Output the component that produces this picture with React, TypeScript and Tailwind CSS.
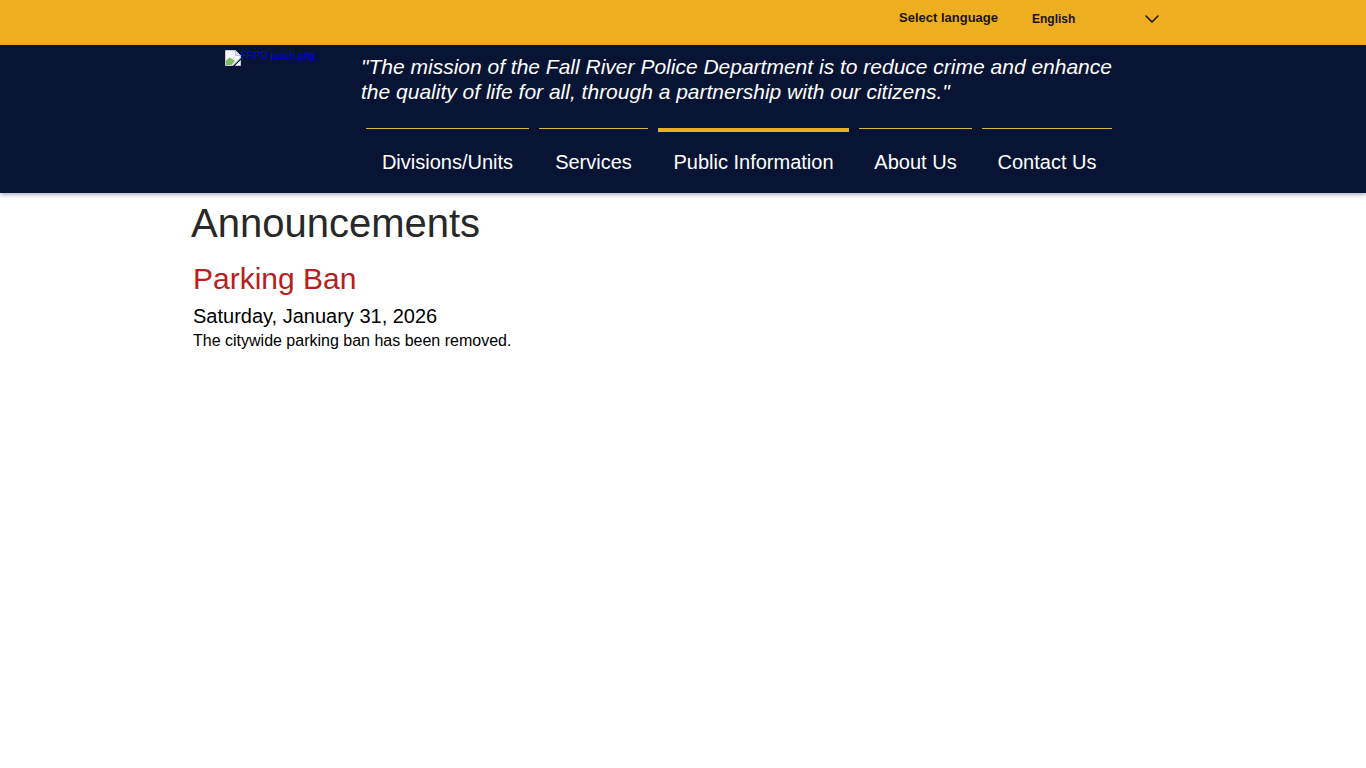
import React from 'react';
import { ChevronDown } from 'lucide-react';

const navItems = [
  { label: 'Divisions/Units', width: 'w-[163px]', active: false },
  { label: 'Services', width: 'w-[109px]', active: false },
  { label: 'Public Information', width: 'w-[191px]', active: true },
  { label: 'About Us', width: 'w-[113px]', active: false },
  { label: 'Contact Us', width: 'w-[130px]', active: false },
];

function BrokenImage() {
  return (
    <svg width="16" height="16" viewBox="0 0 16 16" className="shrink-0">
      <path d="M0.5 0.5H10.5L15.5 5.5V8L8 15.5H0.5Z" fill="#f4f6f8" stroke="#c3c9cf" />
      <path d="M10.5 0.5V5.5H15.5Z" fill="#dfe4e8" stroke="#b7bec5" />
      <path d="M1 14.5V10.5L4.5 7.5L8 9.5L10 11L6.5 15H1Z" fill="#7cb961" />
      <path d="M10.5 15.5L15.5 10.5V15.5Z" fill="#f4f6f8" stroke="#c3c9cf" />
    </svg>
  );
}

export default function App() {
  return (
    <div className="min-h-[768px] bg-white font-['Liberation_Sans',Arial,sans-serif]">
      <div className="h-[45px] bg-[#edae20] flex items-start pl-[899px]">
        <span className="w-[98px] mt-[9px] text-[13px] leading-[17px] font-bold text-[#1c1204] whitespace-nowrap">Select language</span>
        <span className="ml-[35px] mt-[12px] w-[108px] text-[12px] leading-[15px] font-bold text-[#1c1204]">English</span>
        <ChevronDown size={24} strokeWidth={1.5} className="mt-[7px] text-[#1c1204]" />
      </div>

      <header className="h-[148px] bg-[#081434] flex items-start pl-[225px] shadow-[0_2px_4px_rgba(8,20,52,0.3)]">
        <div className="w-[136px] mt-[5px] flex items-start">
          <BrokenImage />
          <span className="text-[10px] leading-[12px] text-[#0000ee]">FRPD patch.png</span>
        </div>
        <div className="w-[760px]">
          <p className="mt-[9px] text-[21px] leading-[25px] italic text-white">
            "The mission of the Fall River Police Department is to reduce crime and enhance
            <br />
            the quality of life for all, through a partnership with our citizens."
          </p>
          <nav className="mt-[24px] ml-[5px] flex gap-[10px]">
            {navItems.map((item) => (
              <a
                key={item.label}
                className={
                  item.width +
                  (item.active
                    ? ' h-[65px] text-center border-t-4 border-[#edae20] pt-[15px] text-[20px] leading-[30px] text-white'
                    : ' h-[65px] text-center border-t border-[#d9b44a] pt-[18px] text-[20px] leading-[30px] text-white')
                }
              >
                {item.label}
              </a>
            ))}
          </nav>
        </div>
      </header>

      <main className="pl-[191px]">
        <h1 className="mt-[7px] text-[40px] leading-[46px] text-[#282828]">Announcements</h1>
        <div className="pl-[2px]">
          <h2 className="mt-[16px] text-[30px] leading-[34px] text-[#b52020]">Parking Ban</h2>
          <p className="mt-[8px] text-[20px] leading-[24px] text-black">Saturday, January 31, 2026</p>
          <p className="mt-[3px] text-[16px] leading-[20px] text-black">The citywide parking ban has been removed.</p>
        </div>
      </main>
    </div>
  );
}
